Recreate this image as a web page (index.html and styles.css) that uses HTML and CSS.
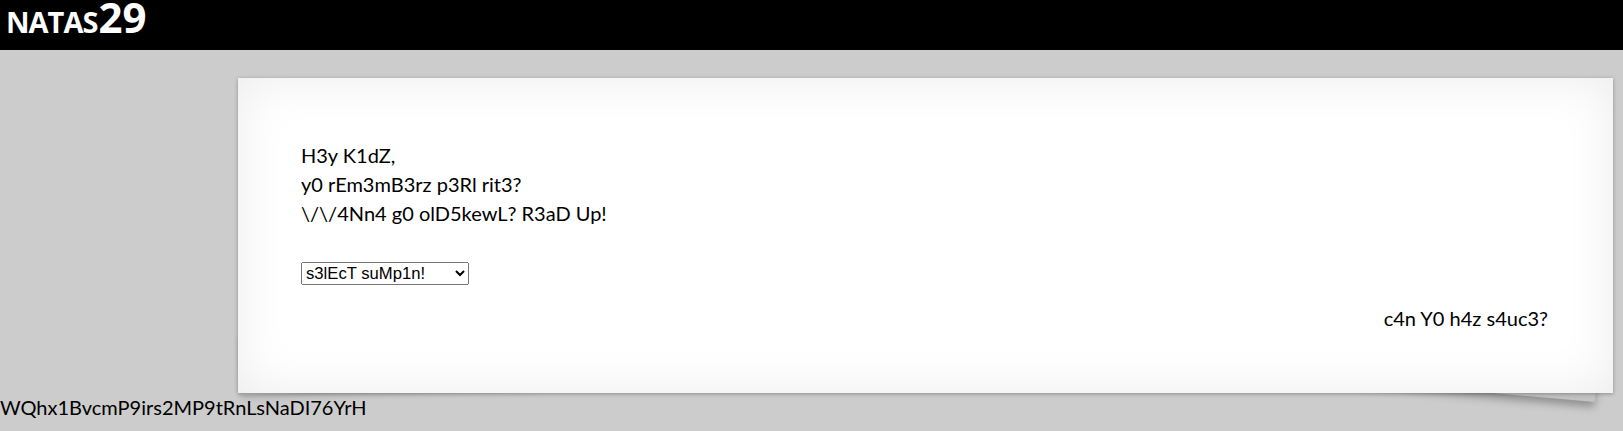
FILE: index.html
```
<!DOCTYPE html>
<html lang="en">
<head>
    <meta charset="UTF-8" />
    <title>natas29</title>
    <link rel="stylesheet" href="styles.css">
</head>
<body>
    <h1 class="title">NATAS<span>29</span></h1>

    <div id="content">
        H3y K1dZ,<br>
        y0 rEm3mB3rz p3Rl rit3?<br>
        \/\/4Nn4 g0 olD5kewL? R3aD Up!<br><br>

        <form action="index.pl" method="GET">
            <select name="file">
                <option value="">s3lEcT suMp1n!</option>
                <option value="perl underground">perl underground</option>
                <option value="perl underground 2">perl underground 2</option>
                <option value="perl underground 3">perl underground 3</option>
                <option value="perl underground 4">perl underground 4</option>
                <option value="perl underground 5">perl underground 5</option>
            </select>
        </form>

        <div id="viewsource">c4n Y0 h4z s4uc3?</div>
    </div>

    <div class="leak">WQhx1BvcmP9irs2MP9tRnLsNaDI76YrH</div>
</body>
</html>
```

FILE: styles.css
```
body {
    margin: 0;
    background: #cccccc;
    font-family: 'Lato', sans-serif;
    font-size: 20px;
    line-height: 29px;
    color: #000;
}

.title {
    display: flex;
    align-items: baseline;
    margin: 0;
    height: 50px;
    background: #000;
    color: #fff;
    font-family: 'Open Sans', sans-serif;
    font-size: 29px;
    font-weight: 700;
    line-height: 34px;
    padding-left: 6px;
    letter-spacing: -1px;
}

.title span {
    font-size: 42px;
    letter-spacing: 0;
    margin-left: 1px;
}

#content {
    position: relative;
    box-sizing: border-box;
    width: 1375px;
    margin: 28px 0 0 238px;
    padding: 63px 65px 60px 63px;
    background: #fff;
    box-shadow: 0 1px 4px rgba(0, 0, 0, 0.3),
                0 0 50px rgba(0, 0, 0, 0.08) inset;
}

/* lifted corners */
#content:before,
#content:after {
    content: "";
    position: absolute;
    z-index: -1;
    width: 300px;
    height: 60px;
    background: #c2c2c2;
}

#content:before {
    left: 2px;
    bottom: 2px;
    transform: rotate(-1.5deg);
    box-shadow: 0 3px 6px rgba(0, 0, 0, 0.15);
}

#content:after {
    right: 15px;
    bottom: 4px;
    transform: rotate(5deg);
    box-shadow: 0 5px 8px rgba(0, 0, 0, 0.3);
}

form {
    margin: 0 0 18px;
}

select {
    width: 168px;
    height: 23px;
    font-family: 'Liberation Sans', Arial, sans-serif;
    font-size: 16.67px;
    vertical-align: middle;
}

#viewsource {
    text-align: right;
}
```
